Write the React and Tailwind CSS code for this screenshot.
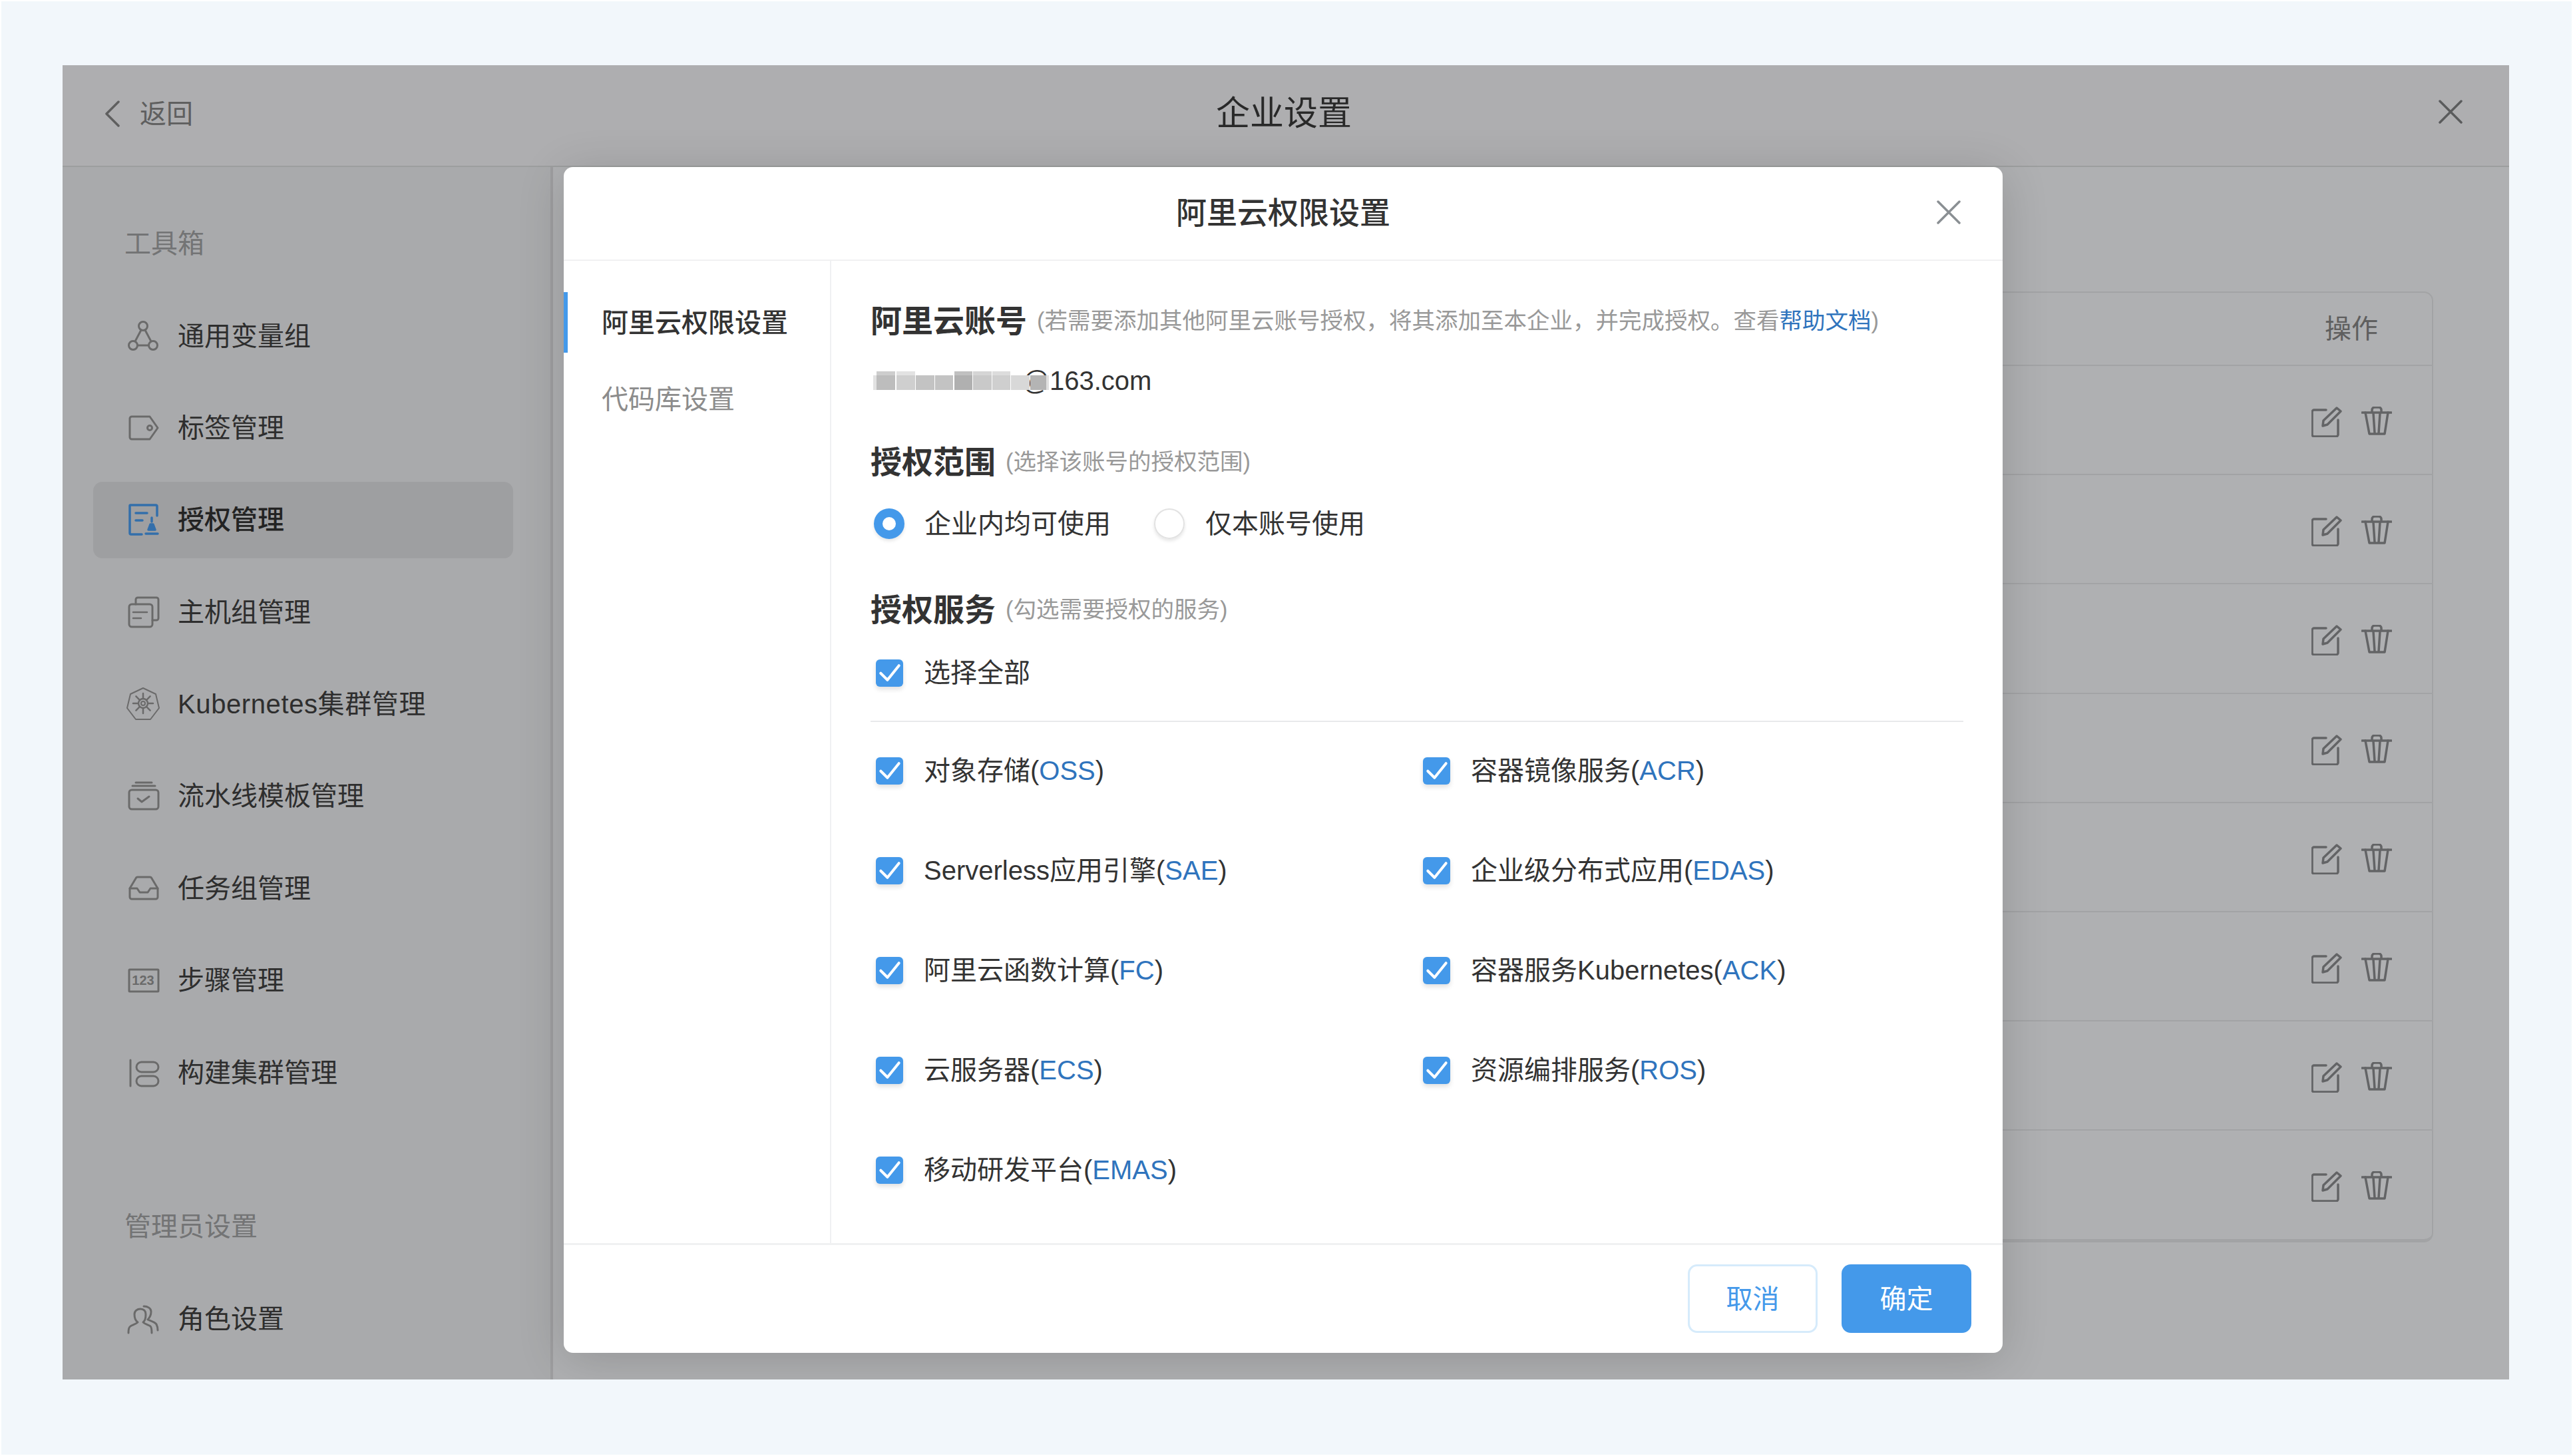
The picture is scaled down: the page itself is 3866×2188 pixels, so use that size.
import { useState } from "react";

const toolItems = [
  { label: "通用变量组", icon: "vars" },
  { label: "标签管理", icon: "tag" },
  { label: "授权管理", icon: "auth", active: true },
  { label: "主机组管理", icon: "hosts" },
  { label: "Kubernetes集群管理", icon: "k8s", wide: true },
  { label: "流水线模板管理", icon: "pipeline" },
  { label: "任务组管理", icon: "inbox" },
  { label: "步骤管理", icon: "steps" },
  { label: "构建集群管理", icon: "cluster" },
];

const services = [
  { name: "对象存储", code: "OSS" },
  { name: "容器镜像服务", code: "ACR" },
  { name: "Serverless应用引擎", code: "SAE" },
  { name: "企业级分布式应用", code: "EDAS" },
  { name: "阿里云函数计算", code: "FC" },
  { name: "容器服务Kubernetes", code: "ACK" },
  { name: "云服务器", code: "ECS" },
  { name: "资源编排服务", code: "ROS" },
  { name: "移动研发平台", code: "EMAS" },
];

// the blurred-out part of the account name
const mosaic = [
  "h-[22px] w-[5px] bg-[#e2e2e2]",
  "h-[28px] w-[28px] border-t-[6px] border-[#cdcdcd] bg-[#bdbdbd]",
  "ml-[2px] h-[28px] w-[28px] border-t-[6px] border-[#e2e2e2] bg-[#cfcfcf]",
  "ml-[1px] h-[22px] w-[28px] bg-[#c3c3c3]",
  "ml-[1px] h-[22px] w-[27px] bg-[#c3c3c3]",
  "ml-[2px] h-[28px] w-[27px] border-t-[6px] border-[#c0c0c0] bg-[#b0b0b0]",
  "ml-[1px] h-[28px] w-[28px] border-t-[6px] border-[#d5d5d5] bg-[#c9c9c9]",
  "ml-[1px] h-[28px] w-[27px] border-t-[6px] border-[#dcdcdc] bg-[#cfcfcf]",
  "ml-[1px] h-[22px] w-[28px] bg-[#d8d8d8]",
  "ml-[1px] h-[22px] w-[24px] bg-[#b4b4b4]",
  "h-[22px] w-[4px] bg-[#e0e0e0]",
];

const spokes = [0, 45, 90, 135, 180, 225, 270, 315];

const NavIcon = ({ name }) => {
  const common = {
    width: 46,
    height: 46,
    viewBox: "0 0 46 46",
    fill: "none",
    stroke: "currentColor",
    strokeWidth: 3,
    strokeLinecap: "round",
    strokeLinejoin: "round",
    className: "shrink-0 overflow-visible",
  };

  if (name === "vars") {
    return (
      <svg {...common}>
        <circle cx="23" cy="8" r="6.5" />
        <circle cx="8" cy="37" r="6.5" />
        <circle cx="38" cy="37" r="6.5" />
        <path d="M20 14 11 31M26 14l9 17M15 37h16" />
      </svg>
    );
  }
  if (name === "tag") {
    return (
      <svg {...common}>
        <path d="M6 6h27l12 17-12 17H6a3 3 0 0 1-3-3V9a3 3 0 0 1 3-3Z" />
        <circle cx="33" cy="23" r="3.5" />
      </svg>
    );
  }
  if (name === "auth") {
    return (
      <svg {...common} strokeWidth={3.5}>
        <path d="M21 45H5a2 2 0 0 1-2-2V2a1 1 0 0 1 1-1h38a2 2 0 0 1 2 2v14" />
        <path d="M12 13h17M12 24h10M27 44h18" />
        <path d="M36 20v6M31 38l3-8h4l3 8Z" fill="currentColor" />
      </svg>
    );
  }
  if (name === "hosts") {
    return (
      <svg {...common}>
        <rect x="2" y="11" width="35" height="34" rx="4" />
        <path d="M12 11V4a3 3 0 0 1 3-3h28a3 3 0 0 1 3 3v28a3 3 0 0 1-3 3h-6" />
        <path d="M8 23h21M8 32h12" strokeWidth={2.5} />
      </svg>
    );
  }
  if (name === "k8s") {
    return (
      <svg {...common} strokeWidth={2}>
        <path d="M23-1 42 8l5 21-13 17H12L-1 29 4 8Z" />
        <circle cx="23" cy="22" r="7" strokeWidth={2.5} />
        <circle cx="23" cy="22" r="3" />
        {spokes.map((deg) => (
          <line key={deg} x1="23" y1="15" x2="23" y2="7" strokeWidth={2.5} transform={`rotate(${deg} 23 22)`} />
        ))}
      </svg>
    );
  }
  if (name === "pipeline") {
    return (
      <svg {...common}>
        <rect x="2" y="14" width="44" height="29" rx="4" />
        <path d="M7 8h34M12 3h24M15 27l6 5 11-8" />
      </svg>
    );
  }
  if (name === "inbox") {
    return (
      <svg {...common}>
        <path d="M3 23v13a3 3 0 0 0 3 3h36a3 3 0 0 0 3-3V23L36 8a3 3 0 0 0-3-2H15a3 3 0 0 0-3 2L3 23Z" />
        <path d="M3 23h11l4 6h12l4-6h11" />
      </svg>
    );
  }
  if (name === "steps") {
    return (
      <svg {...common}>
        <rect x="2" y="7" width="44" height="33" rx="1" />
        <text x="23" y="30" textAnchor="middle" fontSize="20" fontWeight="700" fill="currentColor" stroke="none">
          123
        </text>
      </svg>
    );
  }
  if (name === "cluster") {
    return (
      <svg {...common}>
        <path d="M4 4v39" />
        <rect x="13" y="7" width="33" height="15" rx="7.5" />
        <rect x="13" y="28" width="33" height="15" rx="7.5" />
      </svg>
    );
  }
  return (
    <svg {...common}>
      <path d="M1 44c0-6 1-9 3-10 3-2 8-3 11-6-3-2-5-7-5-12 0-5 4-8 9-8s8 3 8 8c0 5-1 10-4 12 3 3 8 4 11 6 1 1 2 4 2 10" />
      <path d="M24 4c6 0 11 3 11 8 0 5-2 9-5 12 4 2 10 3 13 7 1 2 2 4 2 9" />
    </svg>
  );
};

const CloseIcon = ({ className }) => (
  <svg viewBox="0 0 36 36" fill="none" stroke="currentColor" strokeWidth="3.5" strokeLinecap="round" className={className}>
    <path d="M2 2l32 32M34 2 2 34" />
  </svg>
);

const EditIcon = () => (
  <svg width="46" height="46" viewBox="0 0 46 46" fill="none" stroke="currentColor" strokeWidth="3.5" strokeLinecap="round" strokeLinejoin="round">
    <path d="M22 5H4a3 3 0 0 0-3 3v34a3 3 0 0 0 3 3h33a3 3 0 0 0 3-3V20" />
    <path d="M17 29l1-8L38 2l6 5-20 20Z" />
  </svg>
);

const TrashIcon = () => (
  <svg width="46" height="46" viewBox="0 0 46 46" fill="none" stroke="currentColor" strokeWidth="3.5" strokeLinecap="round" strokeLinejoin="round">
    <path d="M1 9h44M16 9V5a4 4 0 0 1 4-4h6a4 4 0 0 1 4 4v4" />
    <path d="M6 9l6 32h23l5-32M18 10l2 30M28 10l-2 30" />
  </svg>
);

const Check = () => (
  <span className="flex h-[41px] w-[41px] shrink-0 items-center justify-center rounded-[6px] bg-[#4499ea] shadow-[0_4px_7px_rgba(0,0,0,0.12)]">
    <svg width="36" height="36" viewBox="0 0 25 25" fill="none" stroke="#fff" strokeWidth="2.8" strokeLinecap="round" strokeLinejoin="round">
      <path d="M3 13l7 7L22 5" />
    </svg>
  </span>
);

const SectionTitle = ({ children, className, hint }) => (
  <div className={`flex h-[60px] items-center ${className}`}>
    <h3 className="text-[47px] font-semibold text-[#333333]">{children}</h3>
    <span className="ml-[15px] text-[34.5px] text-[#999999]">{hint}</span>
  </div>
);

const SideItem = ({ item }) => (
  <div
    className={`flex h-[115px] items-center gap-[29px] rounded-[14px] pl-[52px] text-[40px] ${
      item.active ? "bg-[#e3e4e7] font-medium text-[#333333]" : "text-[#424242]"
    }`}
  >
    <span className={`flex ${item.active ? "text-[#4a9ff5]" : "text-[#999999]"}`}>
      <NavIcon name={item.icon} />
    </span>
    <span className={item.wide ? "tracking-[0.6px]" : ""}>{item.label}</span>
  </div>
);

const App = () => {
  const [scope, setScope] = useState("all");

  return (
    <div className="box-border h-[2188px] w-[3866px] overflow-hidden border-[2px] border-white bg-[#f2f7fb] pt-[96px] pl-[92px] font-['Liberation_Sans','Noto_Sans_CJK_SC',sans-serif]">
      <div className="relative flex h-[1975px] w-[3676px] flex-col overflow-hidden bg-[#fbfcff]">
        <header className="grid h-[153px] shrink-0 grid-cols-[1fr_auto_1fr] items-center border-b-[2px] border-[#e0e2e3] bg-[#f9fafd] pr-[70px] pb-[5px] pl-[64px]">
          <div className="flex items-center gap-[30px] text-[40px] text-[#888888]">
            <svg width="22" height="40" viewBox="0 0 22 40" fill="none" stroke="currentColor" strokeWidth="3.5" strokeLinecap="round" strokeLinejoin="round">
              <path d="M20 2 2 20l18 18" />
            </svg>
            <span>返回</span>
          </div>
          <h1 className="text-[51px] text-[#3c3c3c]">企业设置</h1>
          <CloseIcon className="-mt-[6px] h-[36px] w-[36px] justify-self-end text-[#828385]" />
        </header>

        <div className="flex min-h-0 flex-1">
          <aside className="h-full w-[737px] shrink-0 border-r-[4px] border-[#e2e3e6] bg-[#f3f4f7] pt-[85px] pr-[56px] pl-[46px]">
            <p className="h-[60px] pl-[47px] text-[40px] leading-[60px] text-[#a5a6a8]">工具箱</p>
            <div className="mt-[51px] flex flex-col gap-[23.4px]">
              {toolItems.map((item) => (
                <SideItem key={item.label} item={item} />
              ))}
            </div>
            <p className="mt-[144px] h-[60px] pl-[47px] text-[40px] leading-[60px] text-[#a5a6a8]">管理员设置</p>
            <div className="mt-[51px]">
              <SideItem item={{ label: "角色设置", icon: "roles" }} />
            </div>
          </aside>

          <main className="min-w-0 flex-1 pt-[187px] pr-[114px] pl-[48px]">
            <div className="rounded-[14px] border-[2px] border-b-[5px] border-[#e9eaec]">
              <div className="flex h-[108px] items-center justify-end">
                <span className="w-[242px] text-center text-[40px] text-[#888888]">操作</span>
              </div>
              {[0, 1, 2, 3, 4, 5, 6, 7].map((row) => (
                <div key={row} className="flex h-[164.2px] items-center justify-end border-t-[2px] border-[#e9eaec] pt-[6px]">
                  <div className="flex w-[242px] justify-center gap-[29px] text-[#8f9092]">
                    <EditIcon />
                    <TrashIcon />
                  </div>
                </div>
              ))}
            </div>
          </main>
        </div>

        {/* dialog layer */}
        <div className="absolute inset-0 bg-black/30">
          <section className="mt-[153px] ml-[753px] flex h-[1782px] w-[2162px] flex-col overflow-hidden rounded-[14px] bg-white text-[#333333] shadow-[0_10px_70px_rgba(0,0,0,0.16)]">
            <div className="relative flex h-[141px] shrink-0 items-center justify-center border-b-[2px] border-[#f0f1f2]">
              <h2 className="text-[46px] font-medium">阿里云权限设置</h2>
              <button className="absolute top-[50px] right-[63px] text-[#8a8f93]">
                <CloseIcon className="h-[36px] w-[36px]" />
              </button>
            </div>

            <div className="flex min-h-0 flex-1">
              <nav className="w-[402px] shrink-0 border-r-[2px] border-[#eff0f2] pt-[47px] text-[40px]">
                <div className="flex h-[91px] items-center border-l-[6px] border-[#4499ea] pl-[51px] font-medium">
                  阿里云权限设置
                </div>
                <div className="mt-[24px] flex h-[91px] items-center pl-[57px] text-[#8c8c8c]">代码库设置</div>
              </nav>

              <div className="min-w-0 flex-1 pt-[61px] pr-[59px] pl-[59px]">
                <SectionTitle
                  hint={
                    <>
                      {"(若需要添加其他阿里云账号授权\uFF0C将其添加至本企业\uFF0C并完成授权\u3002查看"}
                      <a className="text-[#2f74bd]">帮助文档</a>)
                    </>
                  }
                >
                  阿里云账号
                </SectionTitle>

                <div className="mt-[29px] flex h-[60px] items-center text-[40px]">
                  <div className="relative z-10 ml-[4px] flex h-[28px] items-end blur-[0.6px]">
                    {mosaic.map((block, i) => (
                      <span key={i} className={block} />
                    ))}
                  </div>
                  <span className="-ml-[59px] text-[#333333]">
                    <span className="mr-[6px]">r</span>@163.com
                  </span>
                </div>

                <SectionTitle className="mt-[63px]" hint="(选择该账号的授权范围)">
                  授权范围
                </SectionTitle>

                <div className="mt-[32px] flex h-[60px] items-center pl-[5px] text-[40px]">
                  <label className="flex items-center gap-[30px]" onClick={() => setScope("all")}>
                    <span
                      className={`box-border h-[46px] w-[46px] rounded-full shadow-[0_3px_5px_rgba(0,0,0,0.1)] ${
                        scope === "all" ? "border-[13px] border-[#4499ea]" : "border-[2px] border-[#e2e2e2]"
                      }`}
                    />
                    企业内均可使用
                  </label>
                  <label className="ml-[65px] flex items-center gap-[31px]" onClick={() => setScope("self")}>
                    <span
                      className={`box-border h-[46px] w-[46px] rounded-full shadow-[0_3px_5px_rgba(0,0,0,0.1)] ${
                        scope === "self" ? "border-[13px] border-[#4499ea]" : "border-[2px] border-[#e2e2e2]"
                      }`}
                    />
                    仅本账号使用
                  </label>
                </div>

                <SectionTitle className="mt-[70px]" hint="(勾选需要授权的服务)">
                  授权服务
                </SectionTitle>

                <div className="mt-[34px] flex h-[60px] items-center gap-[31px] pl-[8px] text-[40px]">
                  <Check />
                  选择全部
                </div>

                <div className="mt-[42px] h-[2px] bg-[#e8e9eb]" />

                <div className="mt-[43px] grid grid-cols-[822px_1fr] gap-y-[90px] pl-[8px] text-[40px]">
                  {services.map((item) => (
                    <div key={item.code} className="flex h-[60px] items-center gap-[31px]">
                      <Check />
                      <span>
                        {item.name}(<a className="text-[#2f74bd]">{item.code}</a>)
                      </span>
                    </div>
                  ))}
                </div>
              </div>
            </div>

            <footer className="flex h-[165px] shrink-0 items-start justify-end gap-[36px] border-t-[3px] border-[#f0f1f2] pt-[29px] pr-[47px] text-[40px]">
              <button className="h-[103px] w-[195px] rounded-[14px] border-[3px] border-[#d6ebfb] bg-white text-[#4499ea]">取消</button>
              <button className="h-[103px] w-[195px] rounded-[14px] bg-[#4499ea] text-white">确定</button>
            </footer>
          </section>
        </div>
      </div>
    </div>
  );
};

export default App;
